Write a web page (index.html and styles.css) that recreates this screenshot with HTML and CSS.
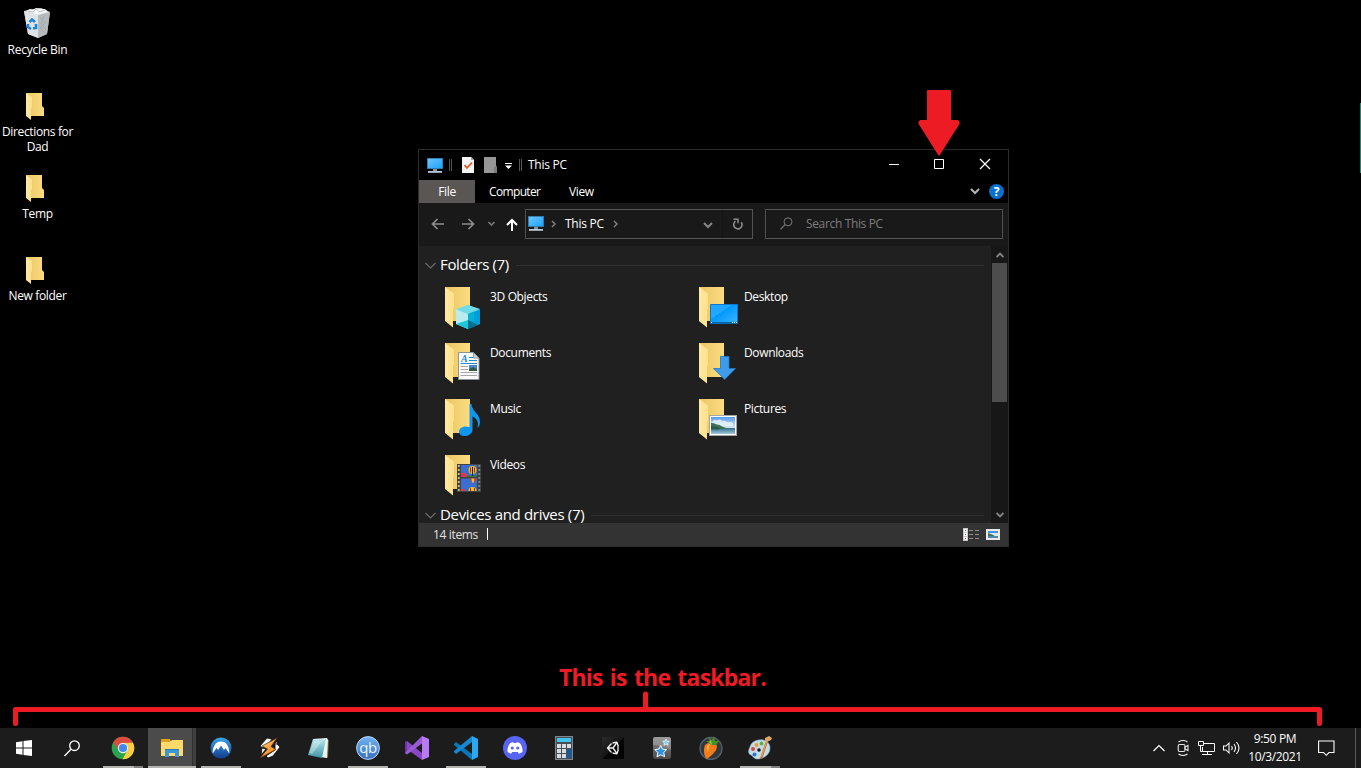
FILE: index.html
```html
<!DOCTYPE html>
<html lang="en">
<head>
<meta charset="utf-8">
<title>Desktop</title>
<link rel="stylesheet" href="styles.css">
</head>
<body>
<svg class="defs" width="0" height="0" aria-hidden="true">
  <defs>
    <linearGradient id="gBack" x1="0" y1="0" x2="1" y2="0"><stop offset="0" stop-color="#e9c663"/><stop offset="1" stop-color="#fbdc80"/></linearGradient>
    <linearGradient id="gFlap" x1="0" y1="0" x2="1" y2="0"><stop offset="0" stop-color="#ffe9a6"/><stop offset="1" stop-color="#ffe08a"/></linearGradient>
    <linearGradient id="gScreen" x1="0" y1="0" x2="1" y2="1"><stop offset="0" stop-color="#6bc4ff"/><stop offset="1" stop-color="#1ca4f8"/></linearGradient>
    <linearGradient id="gDesk" x1="0" y1="0" x2="1" y2="1"><stop offset="0" stop-color="#22a7ff"/><stop offset=".4" stop-color="#22a7ff"/><stop offset=".4" stop-color="#0098fb"/><stop offset="1" stop-color="#3cb4ff"/></linearGradient>
    <linearGradient id="gSky" x1="0" y1="0" x2="0" y2="1"><stop offset="0" stop-color="#5b9bea"/><stop offset="1" stop-color="#e2f0fa"/></linearGradient>
    <linearGradient id="gSea" x1="0" y1="0" x2="0" y2="1"><stop offset="0" stop-color="#2f6d8c"/><stop offset="1" stop-color="#a5c8da"/></linearGradient>
    <linearGradient id="gNord" x1="0" y1="0" x2="0" y2="1"><stop offset="0" stop-color="#3aa6e8"/><stop offset="1" stop-color="#123c8c"/></linearGradient>
    <linearGradient id="gQb" x1="0" y1="0" x2="0" y2="1"><stop offset="0" stop-color="#72b4f5"/><stop offset="1" stop-color="#356ebf"/></linearGradient>
    <linearGradient id="gNote" x1="0" y1="0" x2="0" y2="1"><stop offset="0" stop-color="#b9e6ee"/><stop offset="1" stop-color="#3d93a5"/></linearGradient>
    <linearGradient id="gAnki" x1="0" y1="0" x2="0" y2="1"><stop offset="0" stop-color="#8a8a8a"/><stop offset="1" stop-color="#4b4b4b"/></linearGradient>
    <linearGradient id="gBolt" x1="0" y1="0" x2="1" y2="1"><stop offset="0" stop-color="#ffd08a"/><stop offset="1" stop-color="#f07a00"/></linearGradient>
    <linearGradient id="gUnity" x1="0" y1="0" x2="1" y2="1"><stop offset="0" stop-color="#2b2b2b"/><stop offset=".5" stop-color="#151515"/><stop offset=".5" stop-color="#050505"/><stop offset="1" stop-color="#000"/></linearGradient>
  </defs>
  <symbol id="folder" viewBox="0 0 26 41"><path fill="url(#gBack)" d="M0 0H25V34H0z"/><path fill="url(#gFlap)" d="M0 0l9 6.500V22l-1 1v17.500L0 34z"/></symbol>
  <symbol id="folderSmall" viewBox="0 0 18 27"><path fill="url(#gBack)" d="M0 0H16V13l2 2v8H0z"/><path fill="url(#gFlap)" d="M0 0l6 4v10l-1 1v12L0 23z"/></symbol>
  <symbol id="pc" viewBox="0 0 16 15"><path fill="#2a6f9f" d="M0 0h16v11H0z"/><path fill="url(#gScreen)" d="M.8.8h14.400v9.400H.8z"/><path fill="#8b949b" d="M6 11h4v2H6z"/><path fill="#b9c9d6" d="M1 13h14v1.800H1z"/></symbol>
  <symbol id="photo" viewBox="0 0 28 21"><path fill="#a5a5a5" d="M0 0h28v21H0z"/><path fill="#fff" d="M1 1h26v19H1z"/><path fill="url(#gSky)" d="M2 2h24v12H2z"/><path fill="#f0f8ff" d="M4 6q2-2 4-.5 3-2 5 .5 3-1 5 1 3-1 6 1v3H2V8z" opacity=".75"/><path fill="url(#gSea)" d="M2 13h24v6H2z"/><path fill="#3f7159" d="M2 8q3-.5 6 1.500 3 0 5 2 4 1 6 2.500H2z"/><path fill="#2c5a48" d="M2 11q6 0 10 2.500l-3 1H2z"/></symbol>
</svg>

<main class="desktop">
  <nav class="shortcuts">
    <div class="shortcut bin">
      <svg width="26" height="30" viewBox="0 0 26 30"><path fill="#c9cdd0" d="M0 3l9-2 8-1 9 4-3 22-9 4-10-4z"/><path fill="#dfe3e5" d="M0 3l14 4v23L4 26z"/><path fill="#b5babd" d="M14 7l12-3-3 22-9 4z"/><path fill="#f8f9fa" d="M2 3l4-2 3 1 3-2 5 1 4 0 3 3-10 3z"/><path stroke="#a1a7aa" stroke-width=".7" fill="none" d="M4 3l5 1 3-3 4 3 5-2M16 9l5 6-5 5 5 5M20 8l-3 8 5 6"/><g fill="none" stroke="#1c85dc" stroke-width="2.600"><path d="M5.500 14l2.500-2.500L11 14"/><path d="M4 16l0 3 3 2"/><path d="M9 20.500l3-.5v-4"/></g></svg>
      <span>Recycle Bin</span>
    </div>
    <div class="shortcut"><svg width="18" height="27"><use href="#folderSmall"/></svg><span>Directions for<br>Dad</span></div>
    <div class="shortcut"><svg width="18" height="27"><use href="#folderSmall"/></svg><span>Temp</span></div>
    <div class="shortcut"><svg width="18" height="27"><use href="#folderSmall"/></svg><span>New folder</span></div>
  </nav>
  <div class="edge-strip"></div>

  <section class="window">
    <header class="titlebar">
      <svg class="t-pc" width="16" height="15"><use href="#pc"/></svg>
      <i class="sep s1"></i>
      <svg class="t-prop" width="12" height="16" viewBox="0 0 12 16"><path fill="#f4f4f4" d="M0 0h9l3 3v13H0z"/><path fill="#aaa" d="M9 0v3h3z"/><path fill="none" stroke="#e8561e" stroke-width="1.700" d="M2.500 8l2.500 3 5-5.500"/></svg>
      <svg class="t-new" width="13" height="16" viewBox="0 0 13 16"><path fill="#969696" d="M0 0h12v9l1 1v6H0z"/><path fill="#7d7d7d" d="M10 10l2-1 1 1v6h-3z"/></svg>
      <svg class="t-drop" width="7" height="6" viewBox="0 0 7 6"><path fill="#fff" d="M0 0h7v1H0zM0 2.500h7L3.500 6z"/></svg>
      <i class="sep s2"></i>
      <span class="title">This PC</span>
      <div class="controls">
        <svg width="45" height="30" viewBox="0 0 45 30"><path stroke="#fff" d="M15 14.500h10"/></svg>
        <svg width="46" height="30" viewBox="0 0 46 30"><path fill="none" stroke="#fff" d="M15.500 9.500h9v9h-9z"/></svg>
        <svg width="43" height="30" viewBox="0 0 43 30"><path stroke="#fff" stroke-width="1.200" d="M15 9l10 10M25 9L15 19"/></svg>
      </div>
    </header>
    <div class="tabs">
      <span class="tab file">File</span><span class="tab computer">Computer</span><span class="tab view">View</span>
      <svg class="expand" width="10" height="7" viewBox="0 0 10 7"><path fill="none" stroke="#b5b5b5" stroke-width="2" d="M1 1l4 4 4-4"/></svg>
      <span class="help">?</span>
    </div>
    <div class="navrow">
      <svg class="arrows" width="107" height="20" viewBox="0 0 107 20"><g fill="none" stroke-width="1.700"><path stroke="#8c8c8c" d="M25 9H13.500M18.500 4l-5 5 5 5M43 9h11.500M49.500 4l5 5-5 5"/><path stroke="#777" d="M69.500 7l3 3 3-3"/><path stroke="#fff" stroke-width="2" d="M93 16V5M88 10l5-5 5 5"/></g></svg>
      <div class="address">
        <svg class="a-pc" width="16" height="15"><use href="#pc"/></svg>
        <svg class="crumb" width="5" height="8" viewBox="0 0 5 8"><path fill="none" stroke="#858585" stroke-width="1.400" d="M1 1l3 3-3 3"/></svg>
        <span>This PC</span>
        <svg class="crumb" width="5" height="8" viewBox="0 0 5 8"><path fill="none" stroke="#858585" stroke-width="1.400" d="M1 1l3 3-3 3"/></svg>
        <svg class="a-drop" width="10" height="7" viewBox="0 0 10 7"><path fill="none" stroke="#858585" stroke-width="2" d="M1 1l4 4 4-4"/></svg>
        <span class="refresh"><svg width="12" height="12" viewBox="0 0 12 12"><path fill="none" stroke="#8d8d8d" stroke-width="1.600" d="M9.300 4.200A4.200 4.200 0 1 1 3.500 3.200"/><path fill="none" stroke="#8d8d8d" stroke-width="1.500" d="M1.500 1.200h4.500v4"/></svg></span>
      </div>
      <div class="search"><svg width="13" height="13" viewBox="0 0 13 13"><circle cx="8" cy="4.800" r="4" fill="none" stroke="#7a7a7a"/><path stroke="#7a7a7a" stroke-width="1.200" d="M5 7.700L.5 12.300"/></svg><span>Search This PC</span></div>
    </div>
    <div class="body">
      <div class="files">
        <h2 class="group"><svg width="11" height="7" viewBox="0 0 11 7"><path fill="none" stroke="#6d6d6d" stroke-width="1.100" d="M.5 1l5 5 5-5"/></svg><span class="g1">Folders (7)</span><i></i></h2>
        <div class="grid">
          <div class="item"><svg width="45" height="46" viewBox="0 0 45 46"><use href="#folder" width="26" height="41"/><path fill="#5fdbe9" d="M11 23l12-5 12 5-12 5z"/><path fill="#b8ecf1" d="M11 22l12 5v15l-12-5z"/><path fill="#009ed8" d="M23 27l12-5v15l-12 5z"/><path fill="#72dbe6" d="M11 22l12-4 12 4-12 5z"/><path fill="#00b3d6" d="M23 27l6-2.500V34l-6 1z"/><path fill="#1bc8d9" d="M11 37l12-4v9z"/><path fill="#05718f" d="M23 33l10 5-10 4z"/></svg><span>3D Objects</span></div>
          <div class="item"><svg width="45" height="46" viewBox="0 0 45 46"><use href="#folder" width="26" height="41"/><path fill="url(#gDesk)" stroke="#0b79c8" d="M11.500 17.500h27v19h-27z"/><path fill="#0664b0" d="M12 35h26v1.500H12z"/><path fill="#fff" d="M12 35h1v1h-1zM33 35h1v1h-1zM35 35h1v1h-1zM37 35h1v1h-1z"/></svg><span>Desktop</span></div>
          <div class="item"><svg width="45" height="46" viewBox="0 0 45 46"><use href="#folder" width="26" height="41"/><path fill="#fafafa" stroke="#8c959b" d="M13.500 9.500h15l5.500 5.500v21.500H13.500z"/><path fill="#d0d4d7" stroke="#8c959b" d="M28.500 9.500V15H34z"/><text class="doc-a" x="16" y="18.500">A</text><path stroke="#2389d6" d="M24 14.500h4M24 17.500h8M15.500 20.500H32"/><path stroke="#a7a7a7" d="M15.500 23.500H23M15.500 26.500H23M15.500 29.500H32M15.500 32.500H32"/><path fill="#4d87c5" d="M24 22h8v6h-8z"/><path fill="#315b46" d="M24 26l4-2 4 2v2h-8z"/></svg><span>Documents</span></div>
          <div class="item"><svg width="45" height="46" viewBox="0 0 45 46"><use href="#folder" width="26" height="41"/><path fill="#3e9bea" stroke="#1e78c4" stroke-width=".8" d="M21.500 13.500h8.500V25.500h6.500L25.700 36.500 14.500 25.500h7z"/></svg><span>Downloads</span></div>
          <div class="item"><svg width="45" height="46" viewBox="0 0 45 46"><use href="#folder" width="26" height="41"/><path fill="#0f95ee" d="M24.500 5h2c.5 8 8.500 9 8.500 18 0 3-1 5-2.500 6 1-5 .5-9-5-11.500V31C27 35 23 37 19.500 37S14 35 14 32.500s3-5 6.500-5c1.500 0 2.700.3 4 .8z"/></svg><span>Music</span></div>
          <div class="item"><svg width="45" height="46" viewBox="0 0 45 46"><use href="#folder" width="26" height="41"/><use href="#photo" x="10" y="16" width="28" height="21"/></svg><span>Pictures</span></div>
          <div class="item"><svg width="45" height="46" viewBox="0 0 45 46"><use href="#folder" width="26" height="41"/><path fill="#424242" d="M12 9h24v28H12z"/><path stroke="#cfbd86" stroke-width="1.800" stroke-dasharray="2 2" d="M13.800 10v27"/><path stroke="#858585" stroke-width="1.800" stroke-dasharray="2 2" d="M34.200 10v27"/><path fill="#3a6fd1" d="M16 10h16v12H16zM16 23.500h16V36H16z"/><path fill="#d83a54" d="M16 18q4-2 8 3v1h-8zM16 34q3-1 5 2h-5z"/><path fill="#267a3c" d="M22 20.500h10V22H22z"/><ellipse cx="27.500" cy="15" rx="4" ry="4" fill="#e6b91d"/><path stroke="#b52b27" d="M25.500 12.500v5M29.500 12.500v5"/><path stroke="#272727" d="M27.500 12v9"/><path fill="#d8432b" d="M24.500 23.500h7l-2.500 4h-2z"/><path fill="#e8c124" d="M26.500 23.500h2.500v4h-2zM23.500 36q0-4 4-4t4 4z"/><path stroke="#b52b27" d="M25.500 33v3M29.500 33v3"/></svg><span>Videos</span></div>
        </div>
        <h2 class="group second"><svg width="11" height="7" viewBox="0 0 11 7"><path fill="none" stroke="#6d6d6d" stroke-width="1.100" d="M.5 1l5 5 5-5"/></svg><span class="g2">Devices and drives (7)</span><i></i></h2>
      </div>
      <div class="scroll">
        <svg width="8" height="6" viewBox="0 0 8 6"><path fill="none" stroke="#858585" stroke-width="1.800" d="M.6 5L4 1.600 7.400 5"/></svg>
        <div class="thumb"></div>
        <svg class="down" width="8" height="6" viewBox="0 0 8 6"><path fill="none" stroke="#858585" stroke-width="1.800" d="M.6 1L4 4.400 7.400 1"/></svg>
      </div>
    </div>
    <footer class="status">
      <span>14 items</span><i></i>
      <svg class="details" width="16" height="13" viewBox="0 0 16 13"><path fill="#c9c9c9" d="M0 0h5v13H0z"/><path fill="#fff" d="M1 1h3v3H1zM1 5h3v3H1zM1 9h3v3H1z"/><path fill="#555" d="M2 2h1v1H2zM2 6h1v1H2z"/><path fill="#a33" d="M2 10h1v1H2z"/><path stroke="#8f8f8f" d="M6 2.500h4M12 2.500h4M6 6.500h4M12 6.500h4M6 10.500h4M12 10.500h4"/></svg>
      <svg width="14" height="11" viewBox="0 0 14 11"><path fill="#e9e9e9" d="M0 0h14v11H0z"/><path fill="#4a90e2" d="M2 2h10v3H2z"/><path fill="#d4e8f7" d="M2 4h10v2H2z"/><path fill="#3f7159" d="M2 4l4 1.500 4 2H2z"/><path fill="#4f87a8" d="M2 7h10v2H2z"/></svg>
    </footer>
  </section>

  <svg class="arrow" width="42" height="67" viewBox="0 0 42 67"><path fill="#ed1c24" stroke="#ed1c24" stroke-width="2" stroke-linejoin="round" d="M10 2h22v30h7.500q1.500 1 1 2.500L21 65.500 1.500 34.500q-.5-1.500 1-2.500H10z"/></svg>
  <p class="callout">This is the taskbar.</p>
  <svg class="bracket" width="1309" height="36" viewBox="0 0 1309 36"><path fill="none" stroke="#ed1c24" stroke-width="5" stroke-linecap="round" stroke-linejoin="round" d="M2.500 32.500v-14h1304v14M632.500 3v15"/></svg>
</main>

<footer class="taskbar">
  <div class="task start"><svg width="16" height="16" viewBox="0 0 16 16"><path fill="#fff" d="M0 2.300L6.500 1.300V7.500H0zM7.500 1.100L16 0v7.500H7.500zM0 8.500h6.500v6.200L0 13.700zM7.500 8.500H16V16L7.500 14.900z"/></svg></div>
  <div class="task start"><svg width="17" height="17" viewBox="0 0 17 17"><circle cx="10.500" cy="5.700" r="4.800" fill="none" stroke="#fff" stroke-width="1.300"/><path stroke="#fff" stroke-width="1.300" d="M7 9.200L.5 16"/></svg></div>
  <div class="task open stacked"><svg width="24" height="24" viewBox="0 0 24 24"><circle cx="12" cy="12" r="11.300" fill="#2aa34b"/><path fill="#de4a3e" d="M2.200 6.400a11.300 11.300 0 0 1 19.600 0L22 7H12a5 5 0 0 0-4.500 7z"/><path fill="#fccd3c" d="M21.900 6.700A11.300 11.300 0 0 1 11.500 23.300L16.300 14.500A5 5 0 0 0 12 7z"/><circle cx="12" cy="12" r="5.200" fill="#f3f3f3"/><circle cx="12" cy="12" r="4.100" fill="#4487ee"/></svg></div>
  <div class="task explorer"><svg width="22" height="18" viewBox="0 0 22 18"><path fill="#e39f10" d="M0 0h8l2 2H0z"/><path fill="#ffd96a" d="M0 2h10l1-1h11v16H0z"/><path fill="#e0a21b" d="M0 0h9v3H0z"/><path fill="#3898db" d="M4 10h14v8h-4v-4H8v4H4z"/><path fill="#3179ad" d="M4 10h14v1H4z"/></svg></div>
  <div class="task open"><svg width="22" height="22" viewBox="0 0 22 22"><circle cx="11" cy="11" r="10.500" fill="url(#gNord)"/><path fill="#fff" d="M2.700 16.500C2.500 9 6 4.500 11 4.500s8.500 4.500 8.300 12L15.500 11l-1.500 2-3-4.500L8 13l-1.500-2z"/></svg></div>
  <div class="task"><svg width="22" height="22" viewBox="0 0 22 22"><path fill="#f8f8f8" stroke="#0c0c0c" stroke-width=".8" d="M8 1l5 1-3 4-6 5-3-2zM16 5l5 5-7 9-5 2-2-2 9-6z"/><path fill="#f8f8f8" stroke="#0c0c0c" stroke-width=".8" d="M3 11l4 1-5 6zM19 4l-4 3 3 0z"/><path fill="url(#gBolt)" stroke="#5b2d04" stroke-width=".7" d="M18 1L3 9l5.500 3-7.500 9 16-8.500-5-3z"/></svg></div>
  <div class="task"><svg width="23" height="22" viewBox="0 0 23 22"><path fill="#776037" d="M19 2l3 1-1 18-4-1z"/><path fill="#e9f4f5" d="M6 2l14-1 1 2-1 18-7-1z"/><path fill="url(#gNote)" d="M6 2h13L15 21 1 18z"/><path stroke="#e5f5f7" d="M7 2.500h12" stroke-dasharray="1 1"/><path fill="#def5f8" opacity=".4" d="M7 4h8L5 17l-3-1z"/></svg></div>
  <div class="task open"><svg class="qb" width="24" height="24" viewBox="0 0 24 24"><circle cx="12" cy="12" r="11.400" fill="url(#gQb)" stroke="#b9d7fa"/><text x="12" y="17" text-anchor="middle">qb</text></svg></div>
  <div class="task"><svg width="24" height="24" viewBox="0 0 24 24"><path fill="#8b46c8" d="M0 6l2-1 15 12V24L4 14.500 2 18l-2-1z"/><path fill="#6a37a3" d="M0 6l2-1v13l-2-1z"/><path fill="#9b5bd6" d="M17 0v7.500L2 18.500l-2-1.500z"/><path fill="#b779f4" d="M17 0l7 3v18l-7 3z"/></svg></div>
  <div class="task open"><svg width="24" height="24" viewBox="0 0 24 24"><path fill="#0877b9" d="M0 8l2-2L18 18v6L0 9z"/><path fill="#1688d1" d="M18 0v6L2 18l-2-2v-1z"/><path fill="#2aa9f3" d="M18 0l6 3v18l-6 3z"/></svg></div>
  <div class="task"><svg width="24" height="24" viewBox="0 0 24 24"><circle cx="12" cy="12" r="12" fill="#5865f2"/><path fill="#fff" d="M7 7.300L10 6l.6 1h2.800l.6-1 3 1.300c2 2.800 2.800 5.700 2.500 8.700l-3.500 1.700-1.300-1.800H9.300L8 17.700 4.500 16C4.200 13 5 10 7 7.300z"/><circle cx="9.300" cy="12" r="1.600" fill="#5865f2"/><circle cx="14.700" cy="12" r="1.600" fill="#5865f2"/></svg></div>
  <div class="task"><svg width="18" height="24" viewBox="0 0 18 24"><path fill="#7f878b" d="M0 0h18v24H0z"/><path fill="#454f55" d="M1 1h16v22H1z"/><path fill="#41c4ed" d="M2 2h14v4H2z"/><path fill="#d9dcde" d="M2 8h4v4H2zM7 8h4v4H7zM12 8h4v4h-4zM2 13h4v4H2zM7 13h4v4H7zM2 18h4v4H2zM7 18h4v4H7z"/><path fill="#145ba0" d="M12 13h4v9h-4z"/></svg></div>
  <div class="task"><svg width="22" height="22" viewBox="0 0 22 22"><path fill="url(#gUnity)" d="M0 0h22v22H0z"/><path fill="none" stroke="#f0f0f0" stroke-width="1.300" stroke-linejoin="round" d="M9.500 6.500L5.500 11l4 4.500M5.500 11H11M10.500 6l4.500-.8 1.300 4M10.500 16l4.500.8 1.300-4M15 5.500L11 11l4 5.500M16 8.500v5"/></svg></div>
  <div class="task"><svg width="18" height="22" viewBox="0 0 18 22"><rect width="18" height="22" rx="2.500" fill="url(#gAnki)"/><path fill="#aaa" opacity=".5" d="M0 8q8 0 18 5V2q0-2-2-2H2Q0 0 0 2z"/><path fill="#78cff5" stroke="#fff" stroke-width=".7" d="M13 2l1 2.200 2.300.2-1.700 1.600.5 2.300L13 7l-2.100 1.300.5-2.300-1.700-1.600 2.300-.2z"/><path fill="#2b93dd" stroke="#fff" stroke-width="1" d="M7.700 8.500l1.800 3.600 4.200.5-3 2.900.9 4.200-3.900-1.900-3.700 2 .8-4.300-3-2.900 4.200-.6z"/></svg></div>
  <div class="task"><svg width="24" height="24" viewBox="0 0 24 24"><circle cx="12" cy="12.500" r="11" fill="#32373d" stroke="#555f68" stroke-width="1.300"/><path fill="#f67c18" d="M6 9q4-4 11-1c3 4-2 10-9 15-3-2-4-9-2-14z"/><path fill="#ffb254" d="M8 10q1-2 3-2-2 5-2 9-2-4-1-7z"/><path fill="#4b8e22" d="M11 8L7 5l4 0-2-4 4 3 2-4 1 5 4 0-3 4-5 0z"/><path fill="#94c93d" d="M12 4l1 5-3-3z"/></svg></div>
  <div class="task open stacked"><svg width="24" height="24" viewBox="0 0 24 24"><path fill="#c3dcea" stroke="#8bb3cc" stroke-width=".6" d="M11 4c7-1 11 3 11 8 0 7-7 11-13 11-3 0-4-3-6-4-3-1-3-4-1-8 1-4 4-6.500 9-7z"/><circle cx="5" cy="13" r="2" fill="#d84a3e"/><circle cx="8.500" cy="9" r="1.900" fill="#ef9b22"/><circle cx="13.500" cy="7.500" r="1.900" fill="#5eb13c"/><circle cx="11" cy="14" r="1.800" fill="#191919"/><circle cx="6.500" cy="18.500" r="2" fill="#2c78c7"/><path stroke="#b66a22" stroke-width="2.200" d="M19 5l-6 18"/><path stroke="#f1ad5e" d="M18.500 6l-5 15"/><path fill="#dba56c" d="M17 5l0-3 4-2 3 2-1 2-4 2z"/></svg></div>
  <div class="tray">
    <svg width="12" height="8" viewBox="0 0 12 8"><path fill="none" stroke="#fff" stroke-width="1.200" d="M.5 7L6 1.500 11.500 7"/></svg>
    <svg width="12" height="16" viewBox="0 0 12 16"><g fill="none" stroke="#e8e8e8" stroke-width="1.100"><path d="M1.500 2q4.500-3 9 0M1.500 14q4.500 3 9 0"/><rect x="1.200" y="4.500" width="6.800" height="7" rx="1.500"/><path d="M8 7l3-1.500v5L8 9z"/></g></svg>
    <svg width="17" height="15" viewBox="0 0 17 15"><g fill="none" stroke="#fff"><path d="M5.500 2.500h11v8H4.500V6M4 13.500h10M9.500 10.500v3"/><path d="M.5.500h5v4h-5zM2.500 4.500v6h2"/></g></svg>
    <svg class="volume" width="17" height="14" viewBox="0 0 17 14"><g fill="none" stroke="#fff" stroke-width="1.050"><path d="M.5 5h2.500l3-3v10L3 9H.5z"/><path d="M8.500 5q1.500 2 0 4M11 3q3 4 0 8M13.500 1q5 6 0 12"/></g></svg>
    <div class="clock"><span>9:50 PM</span><span>10/3/2021</span></div>
    <svg class="action" width="17" height="17" viewBox="0 0 17 17"><path fill="none" stroke="#fff" stroke-width="1.100" d="M.6 1h15.400v11.500h-5L8.300 15.300 5.600 12.500h-5z"/></svg>
    <i class="show-desktop"></i>
  </div>
</footer>
</body>
</html>
```
FILE: styles.css
```css
* { box-sizing: border-box; }
body { margin: 0; width: 1361px; height: 768px; overflow: hidden; background: #000; color: #fff; font: 12px/15px "Open Sans", "Noto Sans", sans-serif; letter-spacing: -0.35px; display: flex; flex-direction: column; }
svg { display: block; flex: none; }
.defs { position: absolute; }
.desktop { position: relative; flex: 1; }

.shortcuts { width: 75px; display: flex; flex-direction: column; padding-top: 8px; }
.shortcut { height: 82px; padding-top: 3px; display: flex; flex-direction: column; align-items: center; text-align: center; white-space: nowrap; }
.shortcut svg { margin: 0 5px 4px 0; }
.shortcut.bin { padding-top: 0; }
.shortcut.bin svg { margin: 0 1px 4px 0; }
.shortcut.bin span { letter-spacing: -0.25px; }
.edge-strip { position: absolute; right: 0; top: 103px; width: 1px; height: 70px; background: #1e8a6a; }

.window { position: absolute; left: 418px; top: 149px; width: 591px; height: 398px; border: 1px solid #2b2b2b; display: flex; flex-direction: column; background: #000; }
.titlebar { height: 30px; display: flex; align-items: center; padding-left: 8px; }
.sep { width: 3px; height: 12px; border: solid #555; border-width: 0 1px; }
.s1 { margin: 0 10px 0 6px; }
.t-new { margin: 0 8px 0 10px; }
.t-drop { margin-top: 2px; }
.s2 { margin: 0 6px 0 7px; }
.title { flex: 1; margin-top: -1px; letter-spacing: -0.25px; }
.controls { display: flex; }
.tabs { height: 23px; display: flex; align-items: center; }
.tab.file { width: 56px; height: 23px; line-height: 23px; background: #5a5653; text-align: center; margin-right: 14px; }
.tab.computer { width: 51px; white-space: nowrap; letter-spacing: -0.65px; }
.tab.view { margin-left: 29px; flex: 1; }
.help { width: 15px; height: 15px; border-radius: 50%; background: #0b6fd0; font-weight: 700; text-align: center; margin: -1px 4px 0 9px; }

.navrow { height: 43px; background: #191919; display: flex; align-items: center; padding-right: 5px; }
.arrows { margin-right: -1px; }
.address, .search { height: 30px; border: 1px solid #535353; display: flex; align-items: center; margin-top: -2px; }
.address { width: 228px; }
.a-pc { margin: 0 7px 0 2px; }
.address > span:not(.refresh) { margin: 0 9px; letter-spacing: -0.25px; }
.a-drop { margin-left: auto; margin-top: 3px; }
.refresh { width: 30px; margin-left: 9px; height: 28px; border-left: 1px solid #141414; display: flex; align-items: center; justify-content: center; }
.search { margin-left: 12px; flex: 1; color: #7d7d7d; padding-left: 14px; gap: 13px; letter-spacing: -0.35px; }

.body { height: 277px; display: flex; background: #202020; overflow: hidden; }
.files { flex: 1; padding-top: 9px; }
.group { margin: 0; height: 20px; display: flex; align-items: center; font-size: 15px; line-height: 20px; font-weight: 400; padding: 0 7px 0 6px; }
.group span { margin: -2px 7px 0 4px; white-space: nowrap; }
.group i { flex: 1; height: 1px; background: #303030; }
.second { height: 17px; letter-spacing: -0.32px; }
.second span { line-height: 17px; margin-top: 0; }
.second svg, .second i { margin-top: 2px; }
.grid { display: grid; grid-template-columns: 254px 254px; grid-auto-rows: 56px; padding: 12px 0 0 26px; height: 231px; }
.item { display: flex; }
.item span { margin-top: 2px; }
.doc-a { font: italic 700 10px "Liberation Serif", serif; fill: #2389d6; }
.scroll { width: 17px; background: #171717; display: flex; flex-direction: column; align-items: center; padding: 6px 1px 5px; }
.thumb { width: 15px; height: 139px; margin-top: 5px; background: #4d4d4d; }
.down { margin-top: auto; }
.status { flex: 1; background: #333; display: flex; align-items: center; padding: 0 8px 1px 14px; }
.status span { color: #e2e2e2; }
.status i { width: 1px; height: 12px; background: #fff; margin-left: 9px; }
.details { margin: 0 7px 0 auto; }

.arrow { position: absolute; left: 918px; top: 89px; }
.callout { position: absolute; left: 559px; top: 662px; margin: 0; color: #ed1c24; font: 700 23px/30px "Open Sans", sans-serif; letter-spacing: -0.8px; word-spacing: 2px; white-space: nowrap; }
.bracket { position: absolute; left: 13px; top: 691px; }

.taskbar { height: 40px; background: #1c1c1c; display: flex; }
.task { width: 49px; display: flex; align-items: center; justify-content: center; position: relative; }
.task.start { width: 48px; }
.task.start + .task.start { margin-right: 2px; }
.task.open::after { content: ""; position: absolute; left: 5px; bottom: 0; width: 40px; height: 2px; background: #b5b3b0; }
.task.stacked::after { background: linear-gradient(90deg, #b5b3b0 31px, #83817f 31px); }
.task.explorer { background: linear-gradient(#b5b3b0, #b5b3b0) 1px 38px / 48px 2px no-repeat, linear-gradient(90deg, #4b4b4b 44px, #303030 44px, #303030 45px, #3f3f3f 45px) 1px 0 / 48px 40px no-repeat; }
.qb text { font: 15px "Open Sans", sans-serif; fill: #eaf4ff; letter-spacing: -0.5px; }
.tray { margin-left: auto; display: flex; align-items: center; }
.tray > svg { margin-right: 9px; }
.tray > svg:nth-child(2) { margin-left: 3px; }
.tray > .volume { margin: 0 9px 0 -1px; }
.clock { width: 52px; display: flex; flex-direction: column; align-items: center; line-height: 18px; margin: 0; }
.tray .action { margin: 1px 20px 0 17px; }
.show-desktop { width: 6px; height: 40px; border-left: 1px solid #5a5a5a; }
```
